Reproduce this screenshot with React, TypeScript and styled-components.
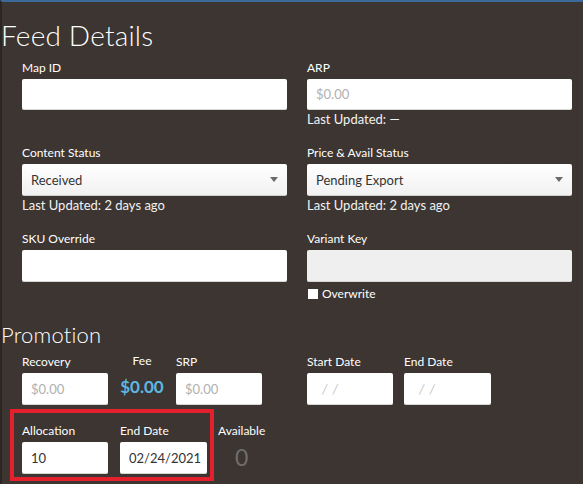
import React from "react";
import styled, { createGlobalStyle } from "styled-components";

const Global = createGlobalStyle`
  html, body {
    margin: 0;
    padding: 0;
    background: #3c3531;
  }
  body {
    font-family: "Lato", "Noto Sans", sans-serif;
    color: #fff;
  }
  * { box-sizing: border-box; }
`;

const Page = styled.div`
  width: 583px;
  height: 484px;
  overflow: hidden;
  background: #3c3531;
  border-top: 2px solid #3a6a9a;
  border-left: 2px solid #2b2622;
`;

const Heading = styled.h1<{ $size: number }>`
  margin: 0 0 0 -1px;
  font-weight: 300;
  font-size: ${(p) => p.$size}px;
  line-height: 1;
  color: #fff;
  letter-spacing: 0.2px;
`;

const FeedHeading = styled(Heading)`
  padding-top: 19px;
`;

const PromoHeading = styled(Heading)`
  padding-top: 23px;
`;

const FeedGrid = styled.div`
  display: grid;
  grid-template-columns: 265px 265px;
  column-gap: 20px;
  row-gap: 19px;
  padding: 12px 0 0 20px;
`;

const Field = styled.div<{ $width?: number }>`
  display: flex;
  flex-direction: column;
  width: ${(p) => (p.$width ? `${p.$width}px` : "auto")};
`;

const Label = styled.label`
  font-size: 12px;
  line-height: 14px;
  height: 14px;
  margin-bottom: 4px;
  color: #fff;
  white-space: nowrap;
`;

const TextInput = styled.div<{ $disabled?: boolean; $h?: number }>`
  height: ${(p) => p.$h ?? 31}px;
  background: ${(p) => (p.$disabled ? "#efefef" : "#fff")};
  border-radius: 2px;
  border-bottom: 1px solid #d6d6d6;
  display: flex;
  align-items: center;
  padding-left: 9px;
  font-size: 13px;
  color: #333;
`;

const Placeholder = styled.span`
  color: #b0b0b0;
`;

const DatePlaceholder = styled.span`
  color: #c4c4c4;
  font-style: italic;
  padding-left: 6px;
  letter-spacing: 1px;
`;

const Select = styled.div`
  height: 32px;
  background: linear-gradient(#ffffff, #f1f1f1);
  border-radius: 2px;
  border-bottom: 1px solid #cfcfcf;
  display: flex;
  align-items: center;
  justify-content: space-between;
  padding: 0 9px 0 9px;
  font-size: 13px;
  color: #333;
`;

const Caret = styled.span`
  width: 0;
  height: 0;
  border-left: 4.5px solid transparent;
  border-right: 4.5px solid transparent;
  border-top: 5px solid #6a6a6a;
`;

const Note = styled.div`
  font-size: 13px;
  line-height: 16px;
  margin-top: 1px;
  color: #f2f2f2;
`;

const CheckRow = styled.div`
  display: flex;
  align-items: center;
  gap: 4px;
  margin-top: 4px;
  padding-left: 1px;
  font-size: 12px;
  color: #fff;
`;

const Box = styled.span`
  width: 10px;
  height: 10px;
  background: #fff;
`;

const PromoGrid = styled.div`
  display: grid;
  grid-template-columns: 265px 265px;
  column-gap: 20px;
  padding: 9px 0 0 20px;
`;

const FieldRow = styled.div<{ $gap: number }>`
  display: flex;
  align-items: flex-start;
  gap: ${(p) => p.$gap}px;
`;

const FeeCol = styled.div`
  width: 68px;
  display: flex;
  flex-direction: column;
  align-items: center;
`;

const FeeLabel = styled(Label)`
  margin-top: -1px;
  margin-bottom: 9px;
`;

const FeeValue = styled.div`
  font-size: 17px;
  font-weight: 700;
  color: #5cb8e2;
  line-height: 20px;
`;

const AllocRow = styled.div`
  display: flex;
  align-items: flex-start;
  gap: 4px;
  padding: 4px 0 0 8px;
`;

const Highlight = styled.div`
  display: flex;
  gap: 12px;
  border: 4px solid #e3202b;
  padding: 11px 2px 3px 8px;
  width: 204px;
`;

const AvailCol = styled.div`
  display: flex;
  flex-direction: column;
  align-items: center;
  padding-top: 15px;
`;

const AvailValue = styled.div`
  font-size: 23px;
  line-height: 24px;
  margin-top: 3px;
  color: #6e6e6e;
`;

export default function App() {
  return (
    <>
      <Global />
      <Page>
        <FeedHeading $size={28}>Feed Details</FeedHeading>
        <FeedGrid>
          <Field>
            <Label>Map ID</Label>
            <TextInput />
          </Field>
          <Field>
            <Label>ARP</Label>
            <TextInput>
              <Placeholder>$0.00</Placeholder>
            </TextInput>
            <Note>Last Updated: —</Note>
          </Field>
          <Field>
            <Label>Content Status</Label>
            <Select>
              Received
              <Caret />
            </Select>
            <Note>Last Updated: 2 days ago</Note>
          </Field>
          <Field>
            <Label>Price &amp; Avail Status</Label>
            <Select>
              Pending Export
              <Caret />
            </Select>
            <Note>Last Updated: 2 days ago</Note>
          </Field>
          <Field>
            <Label>SKU Override</Label>
            <TextInput $h={32} />
          </Field>
          <Field>
            <Label>Variant Key</Label>
            <TextInput $h={32} $disabled />
            <CheckRow>
              <Box />
              Overwrite
            </CheckRow>
          </Field>
        </FeedGrid>

        <PromoHeading $size={22}>Promotion</PromoHeading>
        <PromoGrid>
          <FieldRow $gap={0}>
            <Field $width={86}>
              <Label>Recovery</Label>
              <TextInput $h={32}>
                <Placeholder>$0.00</Placeholder>
              </TextInput>
            </Field>
            <FeeCol>
              <FeeLabel>Fee</FeeLabel>
              <FeeValue>$0.00</FeeValue>
            </FeeCol>
            <Field $width={86}>
              <Label>SRP</Label>
              <TextInput $h={32}>
                <Placeholder>$0.00</Placeholder>
              </TextInput>
            </Field>
          </FieldRow>
          <FieldRow $gap={11}>
            <Field $width={86}>
              <Label>Start Date</Label>
              <TextInput $h={32}>
                <DatePlaceholder>/ /</DatePlaceholder>
              </TextInput>
            </Field>
            <Field $width={87}>
              <Label>End Date</Label>
              <TextInput $h={32}>
                <DatePlaceholder>/ /</DatePlaceholder>
              </TextInput>
            </Field>
          </FieldRow>
        </PromoGrid>
        <AllocRow>
          <Highlight>
            <Field $width={86}>
              <Label>Allocation</Label>
              <TextInput $h={32}>10</TextInput>
            </Field>
            <Field $width={87}>
              <Label>End Date</Label>
              <TextInput $h={32}>02/24/2021</TextInput>
            </Field>
          </Highlight>
          <AvailCol>
            <Label>Available</Label>
            <AvailValue>0</AvailValue>
          </AvailCol>
        </AllocRow>
      </Page>
    </>
  );
}
